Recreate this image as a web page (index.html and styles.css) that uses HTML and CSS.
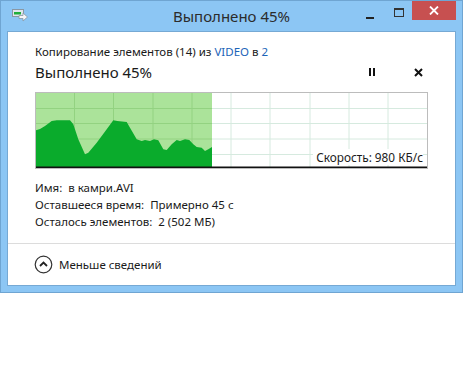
FILE: index.html
```html
<!DOCTYPE html>
<html lang="ru">
<head>
    <meta charset="UTF-8">
    <title>Выполнено 45%</title>
    <link rel="stylesheet" href="styles.css">
</head>
<body>
    <div class="window">
        <div class="titlebar">
            <svg class="app-icon" width="16" height="14" viewBox="0 0 16 14">
                <rect x="0.5" y="1.5" width="11" height="7" fill="#dfe6ec" stroke="#8a97a3"/>
                <rect x="2" y="4" width="7" height="2.5" fill="#1fae3a"/>
                <path d="M7 7.5h4v-2.5l4.5 4-4.5 4v-2.5h-4z" fill="#f4f6f8" stroke="#8a97a3" stroke-width="0.8"/>
            </svg>
            <div class="title">Выполнено 45%</div>
            <div class="caption-buttons">
                <span class="cap-min"></span>
                <span class="cap-max"></span>
                <span class="cap-close">
                    <svg width="10" height="9" viewBox="0 0 10 9"><path d="M1 0.5l8 8M9 0.5l-8 8" stroke="#fff" stroke-width="1.8"/></svg>
                </span>
            </div>
        </div>

        <div class="client">
            <div class="main">
                <div class="op">Копирование элементов (14) из <a href="#">VIDEO</a> в <a href="#">2</a></div>
                <div class="status">
                    <div class="percent">Выполнено 45%</div>
                    <div class="controls">
                        <span class="pause"></span>
                        <svg class="stop" width="9" height="9" viewBox="0 0 9 9"><path d="M1 1l7 7M8 1l-7 7" stroke="#111" stroke-width="2"/></svg>
                    </div>
                </div>

                <div class="chart">
                    <svg width="391" height="75" viewBox="0 0 391 75">
                        <rect x="0" y="0" width="176" height="75" fill="#abe39a"/>
                        <g stroke="#d6eadf" stroke-width="1">
                            <path d="M176 15.5H391M176 30.5H391M176 46H391M176 61.5H391"/>
                            <path d="M195 0V75M234 0V75M274 0V75M313 0V75M352 0V75"/>
                        </g>
                        <g stroke="#93d281" stroke-width="1">
                            <path d="M0 15.5H176M0 30.5H176M0 46H176M0 61.5H176"/>
                            <path d="M38.5 0V75M77.5 0V75M117 0V75M156 0V75"/>
                        </g>
                        <path fill="#0aab2c" d="M0 37.3L4 36L9 33L15.7 28L20.7 27.3L34 27.3L37.3 31.3L42.3 46.3L49 61.3L52.3 59.7L60.7 49.7L70.7 36.3L77.3 27.3L81.3 28L90.7 29L94 34.7L100.7 46.3L105.7 48L109 47L114 48L118 46.3L122.3 47.3L127.3 56.3L130.7 57L135.7 51.3L140.7 47L144 48L149 46.3L153.3 47L157.3 51.3L160.7 54L165.7 54.7L169 58L172.3 56.3L176 54L176 75L0 75Z"/>
                        <path d="M0 74.2H391" stroke="#111" stroke-width="1.6"/>
                    </svg>
                    <div class="speed">Скорость: 980 КБ/с</div>
                </div>

                <div class="info">
                    <div>Имя:&nbsp; в камри.AVI</div>
                    <div>Оставшееся время:&nbsp; Примерно 45 с</div>
                    <div>Осталось элементов:&nbsp; 2 (502 МБ)</div>
                </div>
            </div>

            <div class="footer">
                <svg class="less-icon" width="19" height="19" viewBox="0 0 19 19">
                    <circle cx="9.5" cy="9.5" r="8.3" fill="none" stroke="#333" stroke-width="1.2"/>
                    <path d="M6 11l3.5-3.5 3.5 3.5" fill="none" stroke="#222" stroke-width="1.8"/>
                </svg>
                <span>Меньше сведений</span>
            </div>
        </div>
    </div>
</body>
</html>
```

FILE: styles.css
```css
body {
    margin: 0;
    background: #fff;
    font-family: "Noto Sans", "Open Sans", sans-serif;
    color: #1a1a1a;
}
.window {
    width: 461px;
    height: 291px;
    background: #8cc6f4;
    border: 1px solid #6fa5d2;
    display: flex;
    flex-direction: column;
}
.titlebar {
    height: 30px;
    display: flex;
    align-items: flex-start;
    position: relative;
}
.app-icon {
    margin: 7px 0 0 11px;
}
.title {
    position: absolute;
    left: 0;
    right: 0;
    top: 5px;
    text-align: center;
    font-size: 15px;
    line-height: 20px;
    color: #2b2b2b;
}
.caption-buttons {
    margin-left: auto;
    margin-right: 6px;
    display: flex;
    align-items: flex-start;
    position: relative;
}
.cap-min {
    width: 8px;
    height: 2px;
    background: #222;
    margin: 16px 20px 0 0;
}
.cap-max {
    width: 8px;
    height: 6px;
    border: 1px solid #333;
    border-top-width: 2px;
    margin: 7px 8px 0 0;
}
.cap-close {
    width: 44px;
    height: 19px;
    background: #c75050;
    display: flex;
    align-items: center;
    justify-content: center;
}
.client {
    flex: 1;
    margin: 0 6px 6px 6px;
    background: #fff;
    border: 1px solid #76a9d4;
    display: flex;
    flex-direction: column;
}
.main {
    padding: 12px 32px 0 27px;
}
.op {
    font-size: 11.5px;
    line-height: 16px;
}
.op a {
    color: #1c64b8;
    text-decoration: none;
}
.status {
    margin-top: 2px;
    display: flex;
    align-items: center;
    height: 20px;
}
.percent {
    font-size: 15px;
    line-height: 20px;
}
.controls {
    margin-left: auto;
    display: flex;
    align-items: center;
    gap: 38px;
}
.pause {
    width: 2px;
    height: 8px;
    border-left: 2px solid #111;
    border-right: 2px solid #111;
    margin-right: 1px;
}
.chart {
    margin-top: 10px;
    width: 391px;
    height: 75px;
    border: 1px solid #bcbcbc;
    position: relative;
}
.chart svg {
    display: block;
}
.speed {
    position: absolute;
    right: 4px;
    bottom: 3px;
    background: #fff;
    font-size: 11.8px;
    line-height: 16px;
    padding-left: 3px;
}
.info {
    margin-top: 10px;
    font-size: 11.5px;
    line-height: 17px;
}
.footer {
    margin-top: 13px;
    flex: 1;
    border-top: 1px solid #dcdcdc;
    display: flex;
    align-items: center;
    padding-left: 26px;
    font-size: 11.5px;
    gap: 6px;
}
.less-icon {
    display: block;
}
```
